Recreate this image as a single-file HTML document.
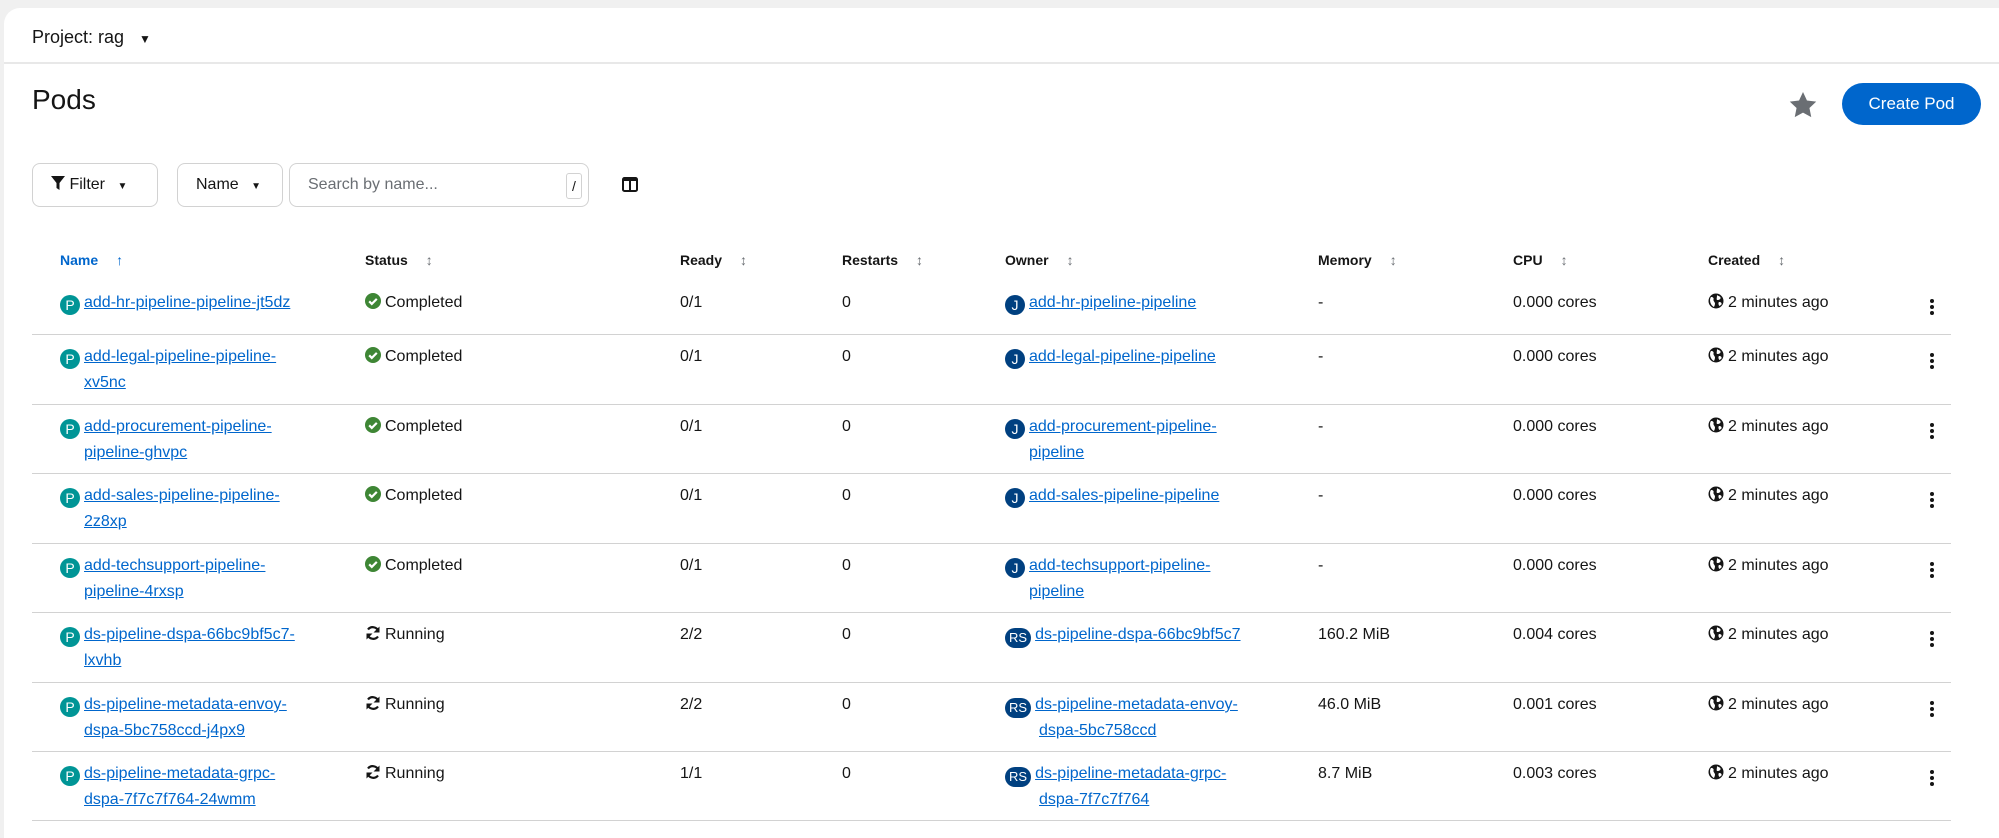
<!DOCTYPE html>
<html><head><meta charset="utf-8"><style>
body{margin:0;width:1999px;height:830px;background:#f0f0f0;font-family:"Liberation Sans",sans-serif;color:#151515;overflow:hidden;position:relative}
.card{position:absolute;left:4px;top:8px;width:1995px;height:830px;background:#fff;border-radius:16px 0 0 0}
.a{position:absolute;white-space:nowrap}
.t{font-size:16px;line-height:25.5px}
a{color:#0066cc;text-decoration:underline}
.h{font-size:14px;font-weight:bold;line-height:20px}
.sort{color:#6a6e73;margin-left:18px;font-weight:normal}
.div{position:absolute;left:32px;width:1919px;height:1px;background:#d2d2d2}
.b{display:inline-block;width:20px;height:20px;border-radius:10px;color:#fff;font-size:14px;line-height:20px;text-align:center;vertical-align:-3px;margin-right:4px}
.P{background:#009596}.J{background:#004080}
.RS{background:#004080;width:auto;padding:0 4px;font-size:13px}
.btn{position:absolute;border:1px solid #d2d2d2;border-radius:8px;box-sizing:border-box;font-size:16px}
.k{position:absolute;left:1930px;width:4px}
.k i{display:block;width:4px;height:4px;border-radius:2px;background:#151515;margin-bottom:2px}
svg.i{vertical-align:-2px;margin-right:4px}
</style></head><body>
<svg width="0" height="0" style="position:absolute">
<defs>
<symbol id="ok" viewBox="0 0 16 16"><circle cx="8" cy="8" r="8" fill="#3e8635"/><path d="M4.2 8.3l2.6 2.6 5-5" fill="none" stroke="#fff" stroke-width="2.2"/></symbol>
<symbol id="run" viewBox="0 0 16 16"><path d="M13.5 6.5A6 6 0 0 0 3 4.5M2.5 9.5A6 6 0 0 0 13 11.5" fill="none" stroke="#151515" stroke-width="2.2"/><path d="M14.5 1.5v6h-6zM1.5 14.5v-6h6z" fill="#151515"/></symbol>
<symbol id="gl" viewBox="0 0 16 16"><circle cx="8" cy="8" r="7.5" fill="#151515"/><path d="M3 4c2 0 3 1 2.5 2.5S7 9 7 10.5 6 14 6 14 4 13 3 11 1.5 6 3 4zM9 2c1 1 3 1 3.5 2.5S11 7 9.5 7 9 5 9 2zM11 9c1.5 0 3 .5 2.5 2.5L11.5 13c-1-1-1.5-3-.5-4z" fill="#fff"/></symbol>
</defs></svg>
<div class="card"></div>
<div class="a" style="left:32px;top:27px;font-size:18px">Project: rag <span style="font-size:12px;margin-left:10px">▼</span></div>
<div style="position:absolute;left:4px;top:62px;width:1995px;height:2px;background:#e8e8e8"></div>
<div class="a" style="left:32px;top:84px;font-size:28px;font-weight:500">Pods</div>
<svg class="a" style="left:1789px;top:92px" width="28" height="26" viewBox="0 0 24 23"><path d="M12 0l3.5 7.5 8.2 1-6 5.6 1.6 8.1L12 18.2 4.7 22.2l1.6-8.1-6-5.6 8.2-1z" fill="#6a6e73"/></svg>
<div class="a" style="left:1842px;top:83px;width:139px;height:42px;border-radius:21px;background:#0066cc;color:#fff;font-size:17px;line-height:42px;text-align:center">Create Pod</div>
<div class="btn" style="left:32px;top:163px;width:126px;height:44px;line-height:42px;padding-left:18px"><svg width="14" height="14" viewBox="0 0 14 14" style="vertical-align:-1px"><path d="M0 0h14L8.5 7v7L5.5 12V7z" fill="#151515"/></svg> Filter <span style="font-size:10px;margin-left:8px">▼</span></div>
<div class="btn" style="left:177px;top:163px;width:106px;height:44px;line-height:42px;padding-left:18px">Name <span style="font-size:10px;margin-left:8px">▼</span></div>
<div class="btn" style="left:289px;top:163px;width:300px;height:44px;line-height:42px;padding-left:18px;color:#6a6e73">Search by name...
<span style="position:absolute;left:276px;top:9px;width:14px;height:24px;border:1px solid #d2d2d2;border-radius:3px;line-height:24px;text-align:center;color:#151515;font-size:14px">/</span></div>
<svg class="a" style="left:622px;top:177px" width="16" height="15" viewBox="0 0 16 15"><rect x="1" y="1" width="14" height="13" rx="1.5" fill="none" stroke="#151515" stroke-width="2"/><rect x="1" y="1" width="14" height="3" fill="#151515"/><rect x="7" y="1" width="2" height="13" fill="#151515"/></svg>

<div class="a h" style="left:60px;top:250px;color:#0066cc">Name<span class="sort" style="color:#0066cc">↑</span></div>
<div class="a h" style="left:365px;top:250px">Status<span class="sort">↕</span></div>
<div class="a h" style="left:680px;top:250px">Ready<span class="sort">↕</span></div>
<div class="a h" style="left:842px;top:250px">Restarts<span class="sort">↕</span></div>
<div class="a h" style="left:1005px;top:250px">Owner<span class="sort">↕</span></div>
<div class="a h" style="left:1318px;top:250px">Memory<span class="sort">↕</span></div>
<div class="a h" style="left:1513px;top:250px">CPU<span class="sort">↕</span></div>
<div class="a h" style="left:1708px;top:250px">Created<span class="sort">↕</span></div>

<div class="div" style="top:334px"></div><div class="div" style="top:404px"></div><div class="div" style="top:473px"></div><div class="div" style="top:543px"></div><div class="div" style="top:612px"></div><div class="div" style="top:682px"></div><div class="div" style="top:751px"></div><div class="div" style="top:820px"></div>

<div class="a t" style="left:60px;top:290px"><span class="b P">P</span><a>add-hr-pipeline-pipeline-jt5dz</a></div>
<div class="a t" style="left:60px;top:344px"><span class="b P">P</span><a>add-legal-pipeline-pipeline-</a><br><span style="margin-left:24px"><a>xv5nc</a></span></div>
<div class="a t" style="left:60px;top:414px"><span class="b P">P</span><a>add-procurement-pipeline-</a><br><span style="margin-left:24px"><a>pipeline-ghvpc</a></span></div>
<div class="a t" style="left:60px;top:483px"><span class="b P">P</span><a>add-sales-pipeline-pipeline-</a><br><span style="margin-left:24px"><a>2z8xp</a></span></div>
<div class="a t" style="left:60px;top:553px"><span class="b P">P</span><a>add-techsupport-pipeline-</a><br><span style="margin-left:24px"><a>pipeline-4rxsp</a></span></div>
<div class="a t" style="left:60px;top:622px"><span class="b P">P</span><a>ds-pipeline-dspa-66bc9bf5c7-</a><br><span style="margin-left:24px"><a>lxvhb</a></span></div>
<div class="a t" style="left:60px;top:692px"><span class="b P">P</span><a>ds-pipeline-metadata-envoy-</a><br><span style="margin-left:24px"><a>dspa-5bc758ccd-j4px9</a></span></div>
<div class="a t" style="left:60px;top:761px"><span class="b P">P</span><a>ds-pipeline-metadata-grpc-</a><br><span style="margin-left:24px"><a>dspa-7f7c7f764-24wmm</a></span></div>

<div class="a t" style="left:365px;top:290px"><svg class="i" width="16" height="16"><use href="#ok"/></svg>Completed</div>
<div class="a t" style="left:365px;top:344px"><svg class="i" width="16" height="16"><use href="#ok"/></svg>Completed</div>
<div class="a t" style="left:365px;top:414px"><svg class="i" width="16" height="16"><use href="#ok"/></svg>Completed</div>
<div class="a t" style="left:365px;top:483px"><svg class="i" width="16" height="16"><use href="#ok"/></svg>Completed</div>
<div class="a t" style="left:365px;top:553px"><svg class="i" width="16" height="16"><use href="#ok"/></svg>Completed</div>
<div class="a t" style="left:365px;top:622px"><svg class="i" width="16" height="16"><use href="#run"/></svg>Running</div>
<div class="a t" style="left:365px;top:692px"><svg class="i" width="16" height="16"><use href="#run"/></svg>Running</div>
<div class="a t" style="left:365px;top:761px"><svg class="i" width="16" height="16"><use href="#run"/></svg>Running</div>

<div class="a t" style="left:680px;top:290px">0/1</div><div class="a t" style="left:842px;top:290px">0</div>
<div class="a t" style="left:680px;top:344px">0/1</div><div class="a t" style="left:842px;top:344px">0</div>
<div class="a t" style="left:680px;top:414px">0/1</div><div class="a t" style="left:842px;top:414px">0</div>
<div class="a t" style="left:680px;top:483px">0/1</div><div class="a t" style="left:842px;top:483px">0</div>
<div class="a t" style="left:680px;top:553px">0/1</div><div class="a t" style="left:842px;top:553px">0</div>
<div class="a t" style="left:680px;top:622px">2/2</div><div class="a t" style="left:842px;top:622px">0</div>
<div class="a t" style="left:680px;top:692px">2/2</div><div class="a t" style="left:842px;top:692px">0</div>
<div class="a t" style="left:680px;top:761px">1/1</div><div class="a t" style="left:842px;top:761px">0</div>

<div class="a t" style="left:1005px;top:290px"><span class="b J">J</span><a>add-hr-pipeline-pipeline</a></div>
<div class="a t" style="left:1005px;top:344px"><span class="b J">J</span><a>add-legal-pipeline-pipeline</a></div>
<div class="a t" style="left:1005px;top:414px"><span class="b J">J</span><a>add-procurement-pipeline-</a><br><span style="margin-left:24px"><a>pipeline</a></span></div>
<div class="a t" style="left:1005px;top:483px"><span class="b J">J</span><a>add-sales-pipeline-pipeline</a></div>
<div class="a t" style="left:1005px;top:553px"><span class="b J">J</span><a>add-techsupport-pipeline-</a><br><span style="margin-left:24px"><a>pipeline</a></span></div>
<div class="a t" style="left:1005px;top:622px"><span class="b RS">RS</span><a>ds-pipeline-dspa-66bc9bf5c7</a></div>
<div class="a t" style="left:1005px;top:692px"><span class="b RS">RS</span><a>ds-pipeline-metadata-envoy-</a><br><span style="margin-left:34px"><a>dspa-5bc758ccd</a></span></div>
<div class="a t" style="left:1005px;top:761px"><span class="b RS">RS</span><a>ds-pipeline-metadata-grpc-</a><br><span style="margin-left:34px"><a>dspa-7f7c7f764</a></span></div>

<div class="a t" style="left:1318px;top:290px">-</div><div class="a t" style="left:1513px;top:290px">0.000 cores</div>
<div class="a t" style="left:1318px;top:344px">-</div><div class="a t" style="left:1513px;top:344px">0.000 cores</div>
<div class="a t" style="left:1318px;top:414px">-</div><div class="a t" style="left:1513px;top:414px">0.000 cores</div>
<div class="a t" style="left:1318px;top:483px">-</div><div class="a t" style="left:1513px;top:483px">0.000 cores</div>
<div class="a t" style="left:1318px;top:553px">-</div><div class="a t" style="left:1513px;top:553px">0.000 cores</div>
<div class="a t" style="left:1318px;top:622px">160.2 MiB</div><div class="a t" style="left:1513px;top:622px">0.004 cores</div>
<div class="a t" style="left:1318px;top:692px">46.0 MiB</div><div class="a t" style="left:1513px;top:692px">0.001 cores</div>
<div class="a t" style="left:1318px;top:761px">8.7 MiB</div><div class="a t" style="left:1513px;top:761px">0.003 cores</div>

<div class="a t" style="left:1708px;top:290px"><svg class="i" width="16" height="16"><use href="#gl"/></svg>2 minutes ago</div>
<div class="a t" style="left:1708px;top:344px"><svg class="i" width="16" height="16"><use href="#gl"/></svg>2 minutes ago</div>
<div class="a t" style="left:1708px;top:414px"><svg class="i" width="16" height="16"><use href="#gl"/></svg>2 minutes ago</div>
<div class="a t" style="left:1708px;top:483px"><svg class="i" width="16" height="16"><use href="#gl"/></svg>2 minutes ago</div>
<div class="a t" style="left:1708px;top:553px"><svg class="i" width="16" height="16"><use href="#gl"/></svg>2 minutes ago</div>
<div class="a t" style="left:1708px;top:622px"><svg class="i" width="16" height="16"><use href="#gl"/></svg>2 minutes ago</div>
<div class="a t" style="left:1708px;top:692px"><svg class="i" width="16" height="16"><use href="#gl"/></svg>2 minutes ago</div>
<div class="a t" style="left:1708px;top:761px"><svg class="i" width="16" height="16"><use href="#gl"/></svg>2 minutes ago</div>

<div class="k" style="top:299px"><i></i><i></i><i></i></div>
<div class="k" style="top:353px"><i></i><i></i><i></i></div>
<div class="k" style="top:423px"><i></i><i></i><i></i></div>
<div class="k" style="top:492px"><i></i><i></i><i></i></div>
<div class="k" style="top:562px"><i></i><i></i><i></i></div>
<div class="k" style="top:631px"><i></i><i></i><i></i></div>
<div class="k" style="top:701px"><i></i><i></i><i></i></div>
<div class="k" style="top:770px"><i></i><i></i><i></i></div>
</body></html>
